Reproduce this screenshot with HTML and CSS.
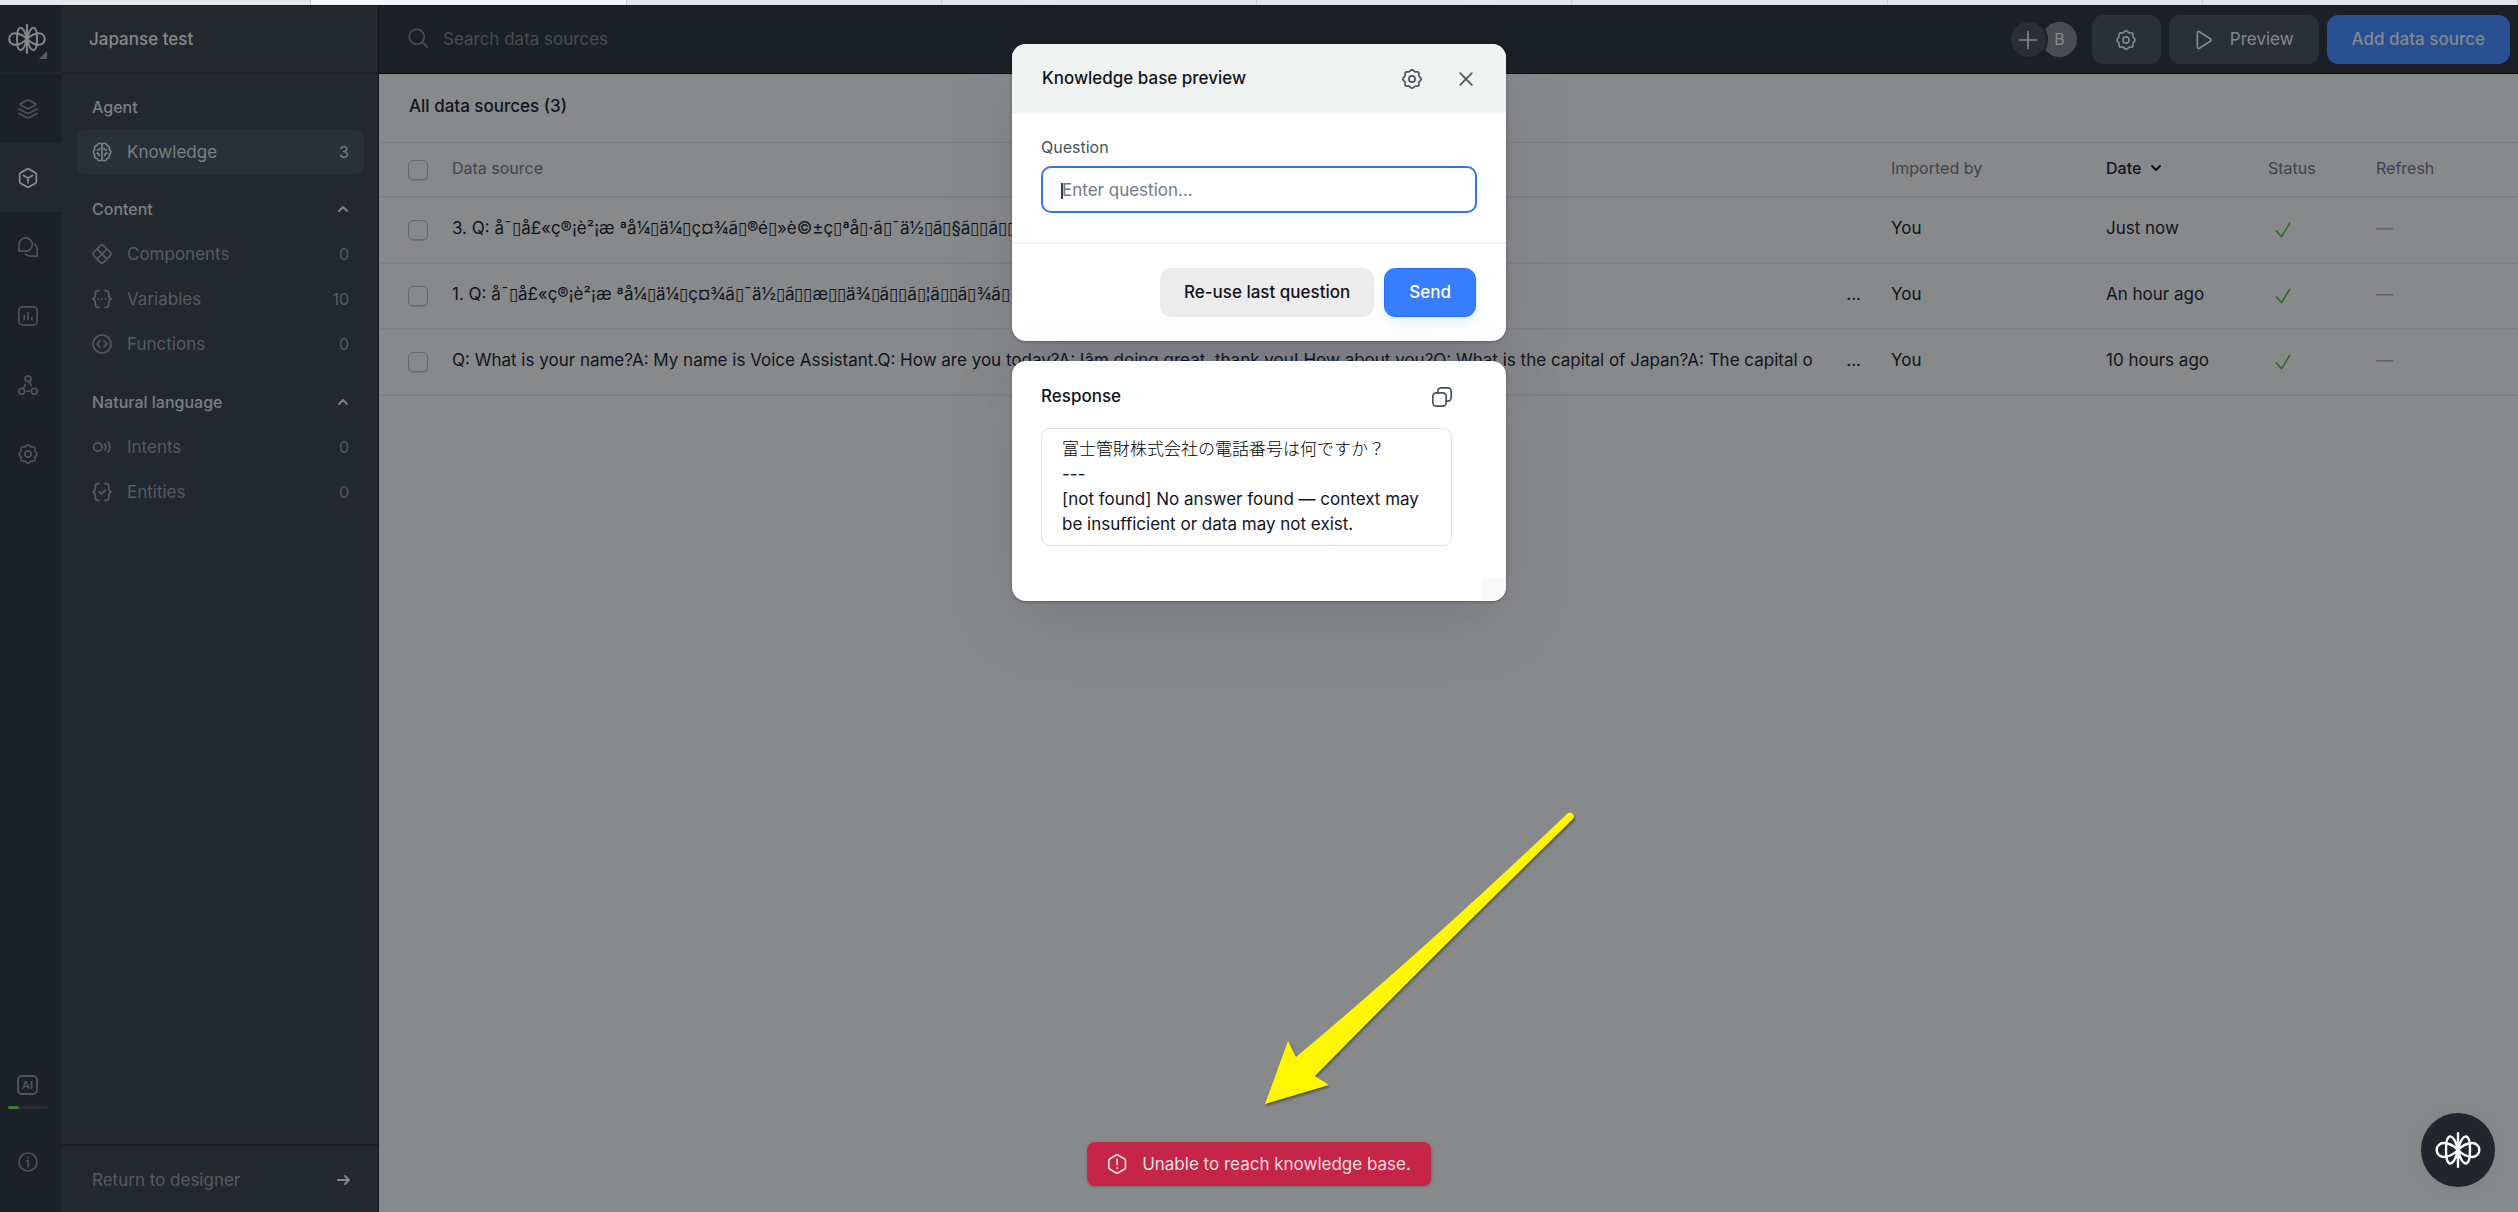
FILE: index.html
```html
<!DOCTYPE html>
<html lang="en">
<head>
    <meta charset="UTF-8">
    <meta name="viewport" content="width=device-width, initial-scale=1.0">
    <title>Knowledge base</title>
    <link rel="stylesheet" href="styles.css">
</head>
<body>
    <!-- icon sprite -->
    <svg class="sprite" aria-hidden="true">
        <symbol id="logo" viewBox="0 0 38 30">
            <path d="M19 1v28M19 15C17.500 9 15 3.800 12.500 3.800C9 3.800 9 11 9 15S9 26.200 12.500 26.200C15 26.200 17.500 21 19 15C20.500 9 23 3.800 25.500 3.800C29 3.800 29 11 29 15S29 26.200 25.500 26.200C23 26.200 20.500 21 19 15M19 15C15 11 11 9.200 7 9.200a5.800 5.800 0 0 0 0 11.600C11 20.800 15 19 19 15C23 11 27 9.200 31 9.200a5.800 5.800 0 0 1 0 11.600C27 20.800 23 19 19 15"/>
        </symbol>
        <symbol id="layers" viewBox="0 0 24 24">
            <path d="M11 1.500a2 2 0 0 1 2 0l7.500 4c1 .5 1 1.500 0 2l-7.500 4a2 2 0 0 1-2 0l-7.500-4c-1-.5-1-1.500 0-2zM1 12l10 5a2 2 0 0 0 2 0l10-5M1 17.500l10 5a2 2 0 0 0 2 0l10-5"/>
        </symbol>
        <symbol id="cube" viewBox="0 0 24 24">
            <path d="M11 1.300a2 2 0 0 1 2 0l8 4.500a2 2 0 0 1 1 1.700v9a2 2 0 0 1-1 1.700L13 22.700a2 2 0 0 1-2 0L3 18.200a2 2 0 0 1-1-1.700v-9a2 2 0 0 1 1-1.700zM6.500 9l5.500 3l5.500-3M12 12v6"/>
        </symbol>
        <symbol id="chats" viewBox="0 0 24 24">
            <path d="M1.200 17V9a8 8 0 1 1 8 8zM20 8.500c2 1.500 3 3.500 3 6V23h-8.500c-2.500 0-4.500-1-5.500-2.500"/>
        </symbol>
        <symbol id="chart" viewBox="0 0 24 24">
            <rect x="1" y="1" width="22" height="22" rx="5"/>
            <path d="M7.500 11.500v5M12 7.500v9M16.500 13.500v3"/>
        </symbol>
        <symbol id="nodes" viewBox="0 0 24 24">
            <circle cx="12" cy="4.500" r="3.500"/><circle cx="4.500" cy="19.500" r="3.500"/><circle cx="19.500" cy="19.500" r="3.500"/>
            <path d="M13.500 8l2.200 4.500M9 11l-2.500 5M10.500 19.500h3.500"/>
        </symbol>
        <symbol id="gear" viewBox="0 0 24 24">
            <path d="M12 1C13.800 1 14.200 3 15.600 3.400S18.700 2.600 19.900 4S19.800 7.100 20.400 8.400S23 10.200 23 12S20.900 14.200 20.400 15.600S21.200 18.700 19.900 20S16.900 20 15.600 20.600S13.800 23 12 23S9.800 21 8.400 20.600S5.300 21.400 4.100 20S4.200 16.900 3.600 15.600S1 13.800 1 12S3.100 9.800 3.600 8.400S2.800 5.300 4.100 4S7.100 4 8.400 3.400S10.200 1 12 1z"/>
            <circle cx="12" cy="12" r="3.700"/>
        </symbol>
        <symbol id="info" viewBox="0 0 24 24">
            <circle cx="12" cy="12" r="10.800"/>
            <path d="M10.500 10.500h1.700V18M12 6.500v.6"/>
        </symbol>
        <symbol id="brain" viewBox="0 0 24 24">
            <path d="M12 3C10.500.8 7 1 6.200 4C3.500 4.200 2.500 7 3.200 9C.8 10.500.8 13.500 3.200 15C2.500 17.500 3.800 19.800 6.200 20C7 23 10.500 23.200 12 21C13.500 23.200 17 23 17.800 20C20.200 19.800 21.500 17.500 20.800 15C23.200 13.500 23.200 10.500 20.800 9C21.500 7 20.500 4.200 17.800 4C17 1 13.500.8 12 3V21M6.500 9.500c2 .3 2.800-.5 3-2M6 13.500c1.800-.3 2.500.8 2.500 3M17.500 9.500c-2 .3-2.800-.5-3-2M18 13.500c-1.800-.3-2.500.8-2.500 3"/>
        </symbol>
        <symbol id="components" viewBox="0 0 24 24">
            <path d="M10 2a3 3 0 0 1 4 0l8 8a3 3 0 0 1 0 4L14 22a3 3 0 0 1-4 0L2 14a3 3 0 0 1 0-4zM6.500 6.500l11 11M17.500 6.500l-11 11"/>
        </symbol>
        <symbol id="variables" viewBox="0 0 24 24">
            <path d="M8.500 2H7C4.500 2 4 3.500 4 5.500C4 9 4 11 1 12C4 13 4 15 4 18.500C4 20.500 4.500 22 7 22h1.500M15.500 2H17c2.500 0 3 1.500 3 3.500c0 3.500 0 5.500 3 6.500c-3 1-3 3-3 6.500c0 2-.5 3.500-3 3.500h-1.500M7.500 12h.6M11.700 12h.6M15.900 12h.6"/>
        </symbol>
        <symbol id="functions" viewBox="0 0 24 24">
            <circle cx="12" cy="12" r="10.800"/>
            <path d="M9.500 8.500L6 12l3.500 3.500M14.500 8.500L18 12l-3.500 3.500"/>
        </symbol>
        <symbol id="intents" viewBox="0 0 24 24">
            <circle cx="7" cy="12" r="5"/>
            <path d="M15.500 8.500c1.200 2 1.200 5 0 7M19.500 6c2.200 3.500 2.200 8.500 0 12"/>
        </symbol>
        <symbol id="entities" viewBox="0 0 24 24">
            <path d="M8.500 2H7C4.500 2 4 3.500 4 5.500C4 9 4 11 1 12C4 13 4 15 4 18.500C4 20.500 4.500 22 7 22h1.500M15.500 2H17c2.500 0 3 1.500 3 3.500c0 3.500 0 5.500 3 6.500c-3 1-3 3-3 6.500c0 2-.5 3.500-3 3.500h-1.500M8.500 11.500l3 3l4.500-4.500"/>
        </symbol>
        <symbol id="up" viewBox="0 0 12 12"><path d="M2 8l4-4l4 4"/></symbol>
        <symbol id="down" viewBox="0 0 12 12"><path d="M2 4l4 4l4-4"/></symbol>
        <symbol id="arrow-right" viewBox="0 0 14 12"><path d="M1 6h11M8 2l4 4l-4 4"/></symbol>
        <symbol id="search" viewBox="0 0 24 24"><circle cx="10.500" cy="10.500" r="9"/><path d="M17 17l6 6"/></symbol>
        <symbol id="plus" viewBox="0 0 24 24"><path d="M12 2v20M2 12h20"/></symbol>
        <symbol id="play" viewBox="0 0 24 24"><path d="M4 3.500c0-1.500 1.200-2.200 2.400-1.400L19.500 10.500c1.200.8 1.200 2.200 0 3L6.400 21.900C5.200 22.700 4 22 4 20.500z"/></symbol>
        <symbol id="check" viewBox="0 0 24 24"><path d="M3 13l7 8L21 3"/></symbol>
        <symbol id="close" viewBox="0 0 24 24"><path d="M5 5l14 14M19 5L5 19"/></symbol>
        <symbol id="copy" viewBox="0 0 24 24">
            <rect x="1" y="7" width="16" height="16" rx="4"/>
            <path d="M7 7V5a4 4 0 0 1 4-4h8a4 4 0 0 1 4 4v8a4 4 0 0 1-4 4h-2"/>
        </symbol>
        <symbol id="alert" viewBox="0 0 24 24">
            <path d="M11 1.300a2 2 0 0 1 2 0l8 4.600a2 2 0 0 1 1 1.700v8.800a2 2 0 0 1-1 1.700l-8 4.600a2 2 0 0 1-2 0l-8-4.600a2 2 0 0 1-1-1.700V7.600a2 2 0 0 1 1-1.700zM12 6.500v6.500M12 16.800v.4"/>
        </symbol>
    </svg>

    <div class="tab-strip"><span></span><span class="current"></span><span></span><span></span><span></span><span></span><span></span><span></span></div>

    <div class="app">
        <nav class="rail">
            <a class="rail-logo" href="#" aria-label="Home"><svg class="icon"><use href="#logo"/></svg></a>
            <a class="rail-item" href="#" aria-label="Designer"><svg class="icon"><use href="#layers"/></svg></a>
            <a class="rail-item active" href="#" aria-label="Content"><svg class="icon"><use href="#cube"/></svg></a>
            <a class="rail-item" href="#" aria-label="Transcripts"><svg class="icon"><use href="#chats"/></svg></a>
            <a class="rail-item" href="#" aria-label="Analytics"><svg class="icon"><use href="#chart"/></svg></a>
            <a class="rail-item" href="#" aria-label="Integrations"><svg class="icon"><use href="#nodes"/></svg></a>
            <a class="rail-item" href="#" aria-label="Settings"><svg class="icon"><use href="#gear"/></svg></a>
            <div class="rail-bottom">
                <a class="usage" href="#">
                    <span class="ai-badge">AI</span>
                    <span class="usage-bar"><span class="usage-fill" style="width: 29%"></span></span>
                </a>
                <a class="rail-item" href="#" aria-label="Help"><svg class="icon"><use href="#info"/></svg></a>
            </div>
        </nav>

        <aside class="sidebar">
            <div class="sidebar-title">Japanse test</div>
            <div class="sidebar-nav">
                <h2 class="group">Agent</h2>
                <a class="nav-item active" href="#"><svg class="icon"><use href="#brain"/></svg>Knowledge<span class="count">3</span></a>
                <h2 class="group">Content<svg class="icon caret"><use href="#up"/></svg></h2>
                <a class="nav-item" href="#"><svg class="icon"><use href="#components"/></svg>Components<span class="count">0</span></a>
                <a class="nav-item" href="#"><svg class="icon"><use href="#variables"/></svg>Variables<span class="count">10</span></a>
                <a class="nav-item" href="#"><svg class="icon"><use href="#functions"/></svg>Functions<span class="count">0</span></a>
                <h2 class="group">Natural language<svg class="icon caret"><use href="#up"/></svg></h2>
                <a class="nav-item" href="#"><svg class="icon"><use href="#intents"/></svg>Intents<span class="count">0</span></a>
                <a class="nav-item" href="#"><svg class="icon"><use href="#entities"/></svg>Entities<span class="count">0</span></a>
            </div>
            <a class="return-link" href="#">Return to designer<svg class="icon return-arrow"><use href="#arrow-right"/></svg></a>
        </aside>

        <main class="main">
            <header class="topbar">
                <svg class="icon search-icon"><use href="#search"/></svg>
                <input class="search" type="search" placeholder="Search data sources" aria-label="Search data sources">
                <div class="members">
                    <button class="avatar add" aria-label="Invite"><svg class="icon"><use href="#plus"/></svg></button>
                    <span class="avatar">B</span>
                </div>
                <button class="btn dark square" aria-label="Settings"><svg class="icon"><use href="#gear"/></svg></button>
                <button class="btn dark"><svg class="icon"><use href="#play"/></svg>Preview</button>
                <button class="btn primary-dim">Add data source</button>
            </header>

            <h1 class="page-title">All data sources (3)</h1>
            <table class="sources">
                <colgroup>
                    <col class="col-check"><col><col class="col-by"><col class="col-date"><col class="col-status"><col class="col-refresh">
                </colgroup>
                <thead>
                    <tr>
                        <th><input type="checkbox" aria-label="Select all"></th>
                        <th>Data source</th>
                        <th>Imported by</th>
                        <th class="sorted">Date<svg class="icon caret"><use href="#down"/></svg></th>
                        <th>Status</th>
                        <th>Refresh</th>
                    </tr>
                </thead>
                <tbody>
                    <tr>
                        <td><input type="checkbox" aria-label="Select source 3"></td>
                        <td><div class="source"><span class="name">3. Q: å¯▯å£«ç®¡è²¡æ ªå¼▯ä¼▯ç¤¾ã▯®é▯»è©±ç▯ªå▯·ã▯¯ä½▯ã▯§ã▯▯ã▯▯</span></div></td>
                        <td>You</td>
                        <td>Just now</td>
                        <td><svg class="icon check"><use href="#check"/></svg></td>
                        <td class="muted">—</td>
                    </tr>
                    <tr>
                        <td><input type="checkbox" aria-label="Select source 1"></td>
                        <td><div class="source"><span class="name">1. Q: å¯▯å£«ç®¡è²¡æ ªå¼▯ä¼▯ç¤¾ã▯¯ä½▯ã▯▯æ▯▯ä¾▯ã▯▯ã▯¦ã▯▯ã▯¾ã▯</span><span>...</span></div></td>
                        <td>You</td>
                        <td>An hour ago</td>
                        <td><svg class="icon check"><use href="#check"/></svg></td>
                        <td class="muted">—</td>
                    </tr>
                    <tr>
                        <td><input type="checkbox" aria-label="Select source Q"></td>
                        <td><div class="source"><span class="name">Q: What is your name?A: My name is Voice Assistant.Q: How are you today?A: Iâm doing great, thank you! How about you?Q: What is the capital of Japan?A: The capital o</span><span>...</span></div></td>
                        <td>You</td>
                        <td>10 hours ago</td>
                        <td><svg class="icon check"><use href="#check"/></svg></td>
                        <td class="muted">—</td>
                    </tr>
                </tbody>
            </table>
        </main>
    </div>

    <div class="overlay">
        <form class="card preview">
            <div class="card-header">
                <h2>Knowledge base preview</h2>
                <button type="button" class="icon-btn" aria-label="Preview settings"><svg class="icon"><use href="#gear"/></svg></button>
                <button type="button" class="icon-btn" aria-label="Close"><svg class="icon"><use href="#close"/></svg></button>
            </div>
            <div class="card-body">
                <label for="question">Question</label>
                <input id="question" type="text" placeholder="Enter question...">
            </div>
            <div class="card-footer">
                <button type="button" class="btn secondary">Re-use last question</button>
                <button type="button" class="btn primary">Send</button>
            </div>
        </form>

        <section class="card response">
            <div class="response-header">
                <h2>Response</h2>
                <button class="icon-btn" aria-label="Copy response"><svg class="icon"><use href="#copy"/></svg></button>
            </div>
            <div class="response-text">
                <p lang="ja">富士管財株式会社の電話番号は何ですか？</p>
                <p>---</p>
                <p>[not found] No answer found — context may be insufficient or data may not exist.</p>
            </div>
            <span class="scroll-corner"></span>
        </section>
    </div>

    <svg class="pointer" viewBox="0 0 330 310" aria-hidden="true">
        <path d="M11 299L34 236L42 252Q170 145 314 8A4 4 0 0 1 319 14Q180 150 61 271L75 280Z"/>
    </svg>

    <div class="toast" role="alert"><svg class="icon"><use href="#alert"/></svg>Unable to reach knowledge base.</div>

    <button class="launcher" aria-label="Open chat"><svg class="icon"><use href="#logo"/></svg></button>
</body>
</html>
```
FILE: styles.css
```css
* {
    box-sizing: border-box;
}
body {
    margin: 0;
    min-height: 100vh;
    display: flex;
    flex-direction: column;
    background-color: #88898b;
    color: #10141d;
    font-family: Inter, "Noto Sans CJK JP", sans-serif;
    font-size: 17px;
    line-height: 25px;
}
h1, h2, p {
    margin: 0;
    font-size: inherit;
    font-weight: 500;
}
p {
    font-weight: 400;
}
p:lang(ja) {
    color: #000;
    font-weight: 300;
}
a {
    color: inherit;
    text-decoration: none;
}
button, input {
    font: inherit;
    color: inherit;
}
button {
    padding: 0;
    border: none;
    background: none;
}
.sprite {
    display: none;
}
.icon {
    width: 20px;
    height: 20px;
    flex: none;
    fill: none;
    stroke: currentColor;
    stroke-width: 2;
    stroke-linecap: round;
    stroke-linejoin: round;
}
.icon.caret {
    width: 12px;
    height: 12px;
}

.tab-strip {
    display: flex;
    height: 6px;
    margin-left: -4px;
    background-color: #e5e7eb;
    border-bottom: 1px solid #15181c;
}
.tab-strip span {
    flex: 1;
    border-right: 1px solid #cbced3;
}
.tab-strip .current {
    background-color: #f4f6fa;
}

.app {
    flex: 1;
    display: flex;
}

/* left rail */
.rail {
    width: 62px;
    display: flex;
    flex-direction: column;
    padding-right: 7px;
    background-color: #1c2127;
    color: #505458;
}
.rail-logo {
    height: 68px;
    display: flex;
    align-items: center;
    justify-content: center;
    margin-right: -7px;
    padding-right: 8px;
    border-bottom: 2px solid #23282c;
    color: #85888a;
    position: relative;
}
.rail-logo .icon {
    width: 38px;
    height: 30px;
}
.rail-logo::after {
    content: "";
    position: absolute;
    right: 15px;
    bottom: 13px;
    border: 4px solid;
    border-color: transparent #5a5e62 #5a5e62 transparent;
}
.rail-item {
    height: 69px;
    display: flex;
    align-items: center;
    justify-content: center;
}
.rail-item.active {
    margin-right: -7px;
    padding-right: 7px;
    background-color: #23282f;
    color: #8c8f92;
}
.rail-bottom {
    margin-top: auto;
    padding-bottom: 16px;
}
.usage {
    display: flex;
    flex-direction: column;
    align-items: center;
    gap: 11px;
    padding-bottom: 18px;
}
.ai-badge {
    width: 21px;
    height: 20px;
    border: 2px solid;
    border-radius: 5px;
    font-size: 11px;
    font-weight: 700;
    line-height: 16px;
    text-align: center;
}
.usage-bar {
    width: 40px;
    height: 3px;
    border-radius: 2px;
    background-color: #2a2f36;
}
.usage-fill {
    display: block;
    height: 100%;
    border-radius: 2px;
    background-color: #3d7a2b;
}

/* sidebar */
.sidebar {
    width: 317px;
    display: flex;
    flex-direction: column;
    background-color: #23272e;
    border-right: 1px solid #10141a;
    color: #575b60;
}
.sidebar-title {
    height: 68px;
    padding: 21px 27px;
    border-bottom: 2px solid #1d2125;
    background-color: #23282d;
    color: #85888a;
    font-weight: 500;
}
.sidebar-nav {
    flex: 1;
    padding: 11px 14px 0 15px;
}
.group {
    display: flex;
    align-items: center;
    justify-content: space-between;
    height: 44px;
    margin: 13px 0 1px;
    padding: 0 15px;
    color: #7c7f83;
    font-size: 16px;
}
.group:first-child {
    margin-top: 0;
}
.nav-item {
    display: flex;
    align-items: center;
    gap: 15px;
    height: 44px;
    margin-bottom: 1px;
    padding: 0 15px;
    border-radius: 8px;
}
/* margins of neighbours add up instead of collapsing */
.sidebar-nav {
    display: flex;
    flex-direction: column;
}
.nav-item.active {
    background-color: #2a3038;
    color: #7c7f83;
    margin-bottom: 0;
}
.count {
    margin-left: auto;
    font-size: 16px;
}
.return-link {
    display: flex;
    align-items: center;
    justify-content: space-between;
    height: 68px;
    padding: 2px 27px 0 30px;
    border-top: 2px solid #1b1f24;
}
.icon.return-arrow {
    width: 14px;
    height: 12px;
    color: #85888a;
}

/* main area */
.main {
    flex: 1;
    min-width: 0;
}
.topbar {
    display: flex;
    align-items: center;
    height: 68px;
    padding: 0 8px 0 29px;
    background-color: #1b2026;
    border-bottom: 1px solid #0a0d10;
    color: #85888a;
}
.search-icon {
    color: #4a4e53;
    margin-bottom: 4px;
}
.search {
    flex: 1;
    padding: 0 15px;
    border: none;
    outline: none;
    background: none;
}
.search::placeholder {
    color: #494d51;
}
.members {
    display: flex;
    margin-right: 15px;
}
.avatar {
    width: 35px;
    height: 35px;
    margin-left: -4px;
    display: flex;
    align-items: center;
    justify-content: center;
    border-radius: 50%;
    background-color: #474d51;
    font-size: 16px;
}
.avatar.add {
    background-color: #2a2f36;
    box-shadow: 0 0 0 2px #1b2026;
    z-index: 1;
}
.btn {
    display: flex;
    align-items: center;
    justify-content: center;
    gap: 16px;
    height: 49px;
    padding: 0 24px;
    border-radius: 11px;
    font-weight: 500;
}
.btn.dark {
    margin-right: 8px;
    padding: 0 25px;
    background-color: #2a3037;
    font-weight: 400;
}
.btn.square {
    width: 69px;
}
.btn.primary-dim {
    background-color: #284f92;
    border: 1px solid #2450a0;
}
.page-title {
    height: 69px;
    padding: 20px 30px;
    border-bottom: 1px solid #7b7d80;
}
.sources {
    width: 100%;
    table-layout: fixed;
    border-collapse: collapse;
}
.col-check {
    width: 73px;
}
.col-by {
    width: 215px;
}
.col-date {
    width: 162px;
}
.col-status {
    width: 108px;
}
.col-refresh {
    width: 142px;
}
.sources th, .sources td {
    padding: 0 0 3px;
    border-bottom: 2px solid #7f8184;
    text-align: left;
}
.sources th {
    height: 54px;
    color: #3d454e;
    font-size: 16px;
    font-weight: 400;
}
.sources td {
    height: 66px;
}
.sources .sorted {
    color: #10141d;
    font-weight: 500;
}
.sorted .caret {
    margin-left: 9px;
}
.sources .muted {
    color: #5d6166;
}
.sources td:first-child, .sources th:first-child {
    padding: 0 0 0 29px;
}
.source {
    display: flex;
    justify-content: space-between;
    padding-right: 30px;
}
.name {
    overflow: hidden;
    white-space: nowrap;
}
.icon.check {
    display: block;
    margin: 3px 0 0 6px;
    width: 18px;
    height: 18px;
    color: #2c6b1c;
}
input[type="checkbox"] {
    appearance: none;
    display: block;
    width: 20px;
    height: 20px;
    margin: 0;
    border: 1px solid #66696c;
    border-radius: 5px;
    box-shadow: 0 1px 1px rgba(0, 0, 0, 0.15);
}

/* preview dialog */
.overlay {
    position: absolute;
    inset: 0;
    display: flex;
    flex-direction: column;
    align-items: center;
    gap: 20px;
    padding-top: 44px;
}
.card {
    width: 494px;
    border-radius: 14px;
    background-color: #fff;
    box-shadow: 0 1px 3px rgba(0, 0, 0, 0.3), 0 20px 70px rgba(19, 33, 68, 0.13);
}
.card-header {
    display: flex;
    align-items: center;
    height: 69px;
    padding: 0 30px;
    border-radius: 14px 14px 0 0;
    background-color: #f1f3f3;
}
.card-header h2 {
    flex: 1;
}
.icon-btn {
    display: flex;
    color: #46525e;
}
.icon-btn + .icon-btn {
    margin-left: 34px;
}
.card-body {
    padding: 22px 29px 29px;
    border-bottom: 2px solid #f1f3f3;
}
.card-body label {
    display: block;
    margin-bottom: 6px;
    color: #46525e;
    font-size: 16px;
}
.card-body input {
    width: 100%;
    height: 47px;
    padding: 0 19px;
    border: 2px solid #2f74f5;
    border-radius: 10px;
    outline: none;
    /* static text cursor */
    background: linear-gradient(#333b45, #333b45) 18px 15px / 2px 16px no-repeat #fff;
}
.card-body input::placeholder {
    color: #747b84;
}
.card-footer {
    display: flex;
    justify-content: flex-end;
    gap: 10px;
    padding: 24px 30px;
}
.secondary {
    background-color: #ececec;
    color: #10141d;
}
.primary {
    background-color: #397dff;
    border: 1px solid #2370ff;
    color: #fff;
    box-shadow: 0 4px 10px rgba(57, 125, 255, 0.15);
}
.response {
    position: relative;
    height: 240px;
    padding: 23px 54px 0 29px;
    overflow: hidden;
}
.response-header {
    display: flex;
    align-items: center;
    justify-content: space-between;
    margin-bottom: 19px;
}
.response-text {
    padding: 8px 20px;
    border: 1px solid #dcdfe0;
    border-radius: 9px;
}
.scroll-corner {
    position: absolute;
    right: 0;
    bottom: 0;
    width: 25px;
    height: 24px;
    background-color: #fafafa;
}

.pointer {
    position: absolute;
    left: calc(50% - 5px);
    bottom: 97px;
    width: 330px;
    height: 310px;
    fill: #fff700;
    filter: drop-shadow(1px 2px 1px rgba(0, 0, 0, 0.4));
}
.toast {
    position: absolute;
    left: 50%;
    bottom: 26px;
    transform: translateX(-50%);
    display: flex;
    align-items: center;
    gap: 15px;
    height: 44px;
    padding: 0 20px;
    border-radius: 8px;
    background-color: #c52546;
    color: #ffdde3;
    white-space: nowrap;
    box-shadow: 0 1px 3px rgba(0, 0, 0, 0.2);
}
.launcher {
    position: absolute;
    right: 23px;
    bottom: 25px;
    display: flex;
    align-items: center;
    justify-content: center;
    width: 74px;
    height: 74px;
    border-radius: 50%;
    background-color: #20262b;
    color: #fff;
    box-shadow: 0 2px 20px rgba(0, 0, 0, 0.06);
}
.launcher .icon {
    width: 46px;
    height: 36px;
}
```
